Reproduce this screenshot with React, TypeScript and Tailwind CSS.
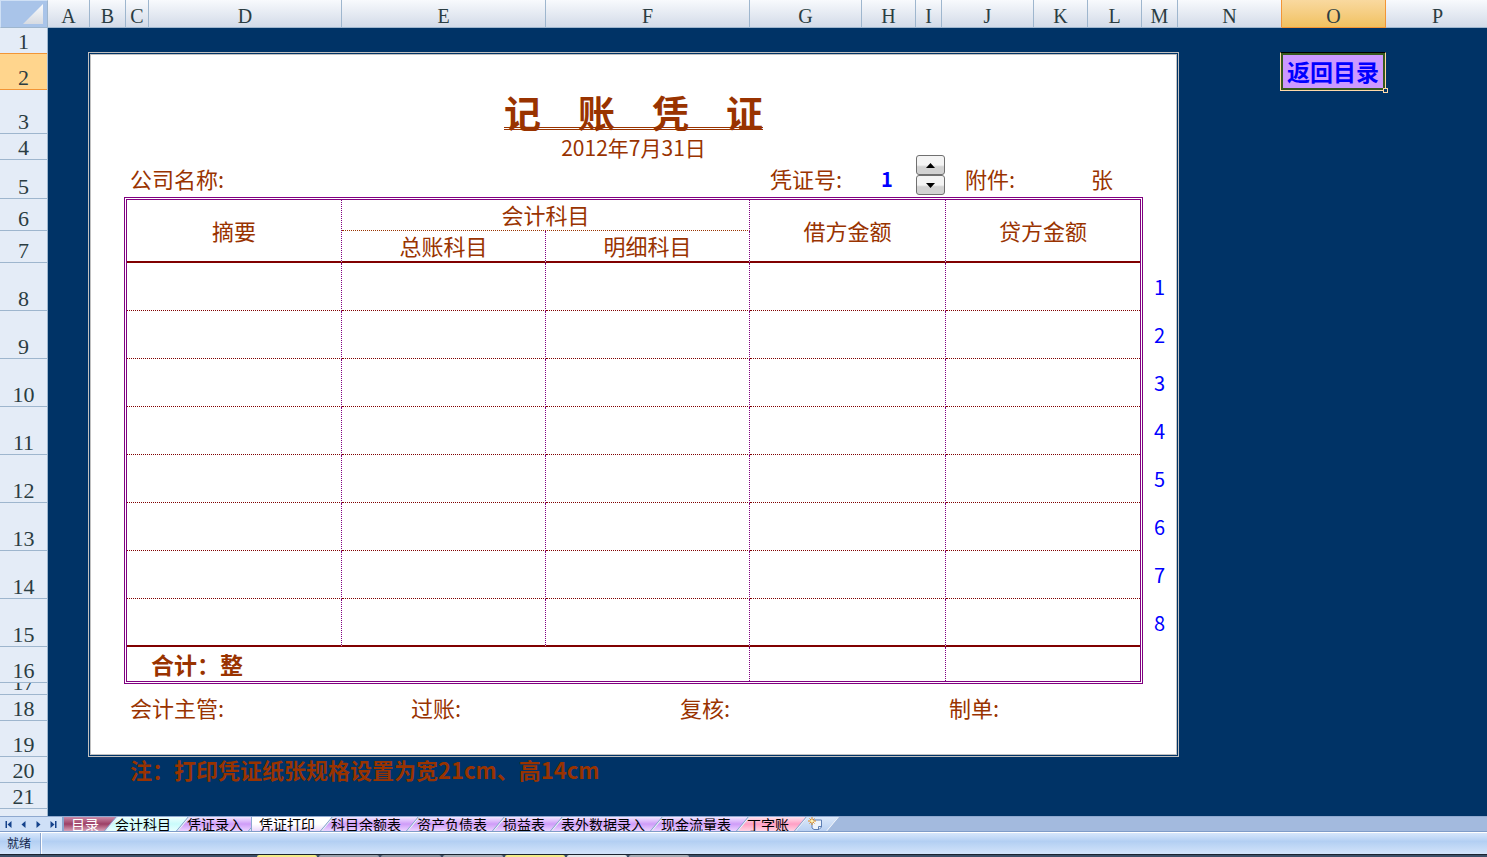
import { useState } from "react";
import { clsx } from "clsx";

const columns = [
    { name: "A", width: "w-[42px]" },
    { name: "B", width: "w-[36px]" },
    { name: "C", width: "w-[23px]" },
    { name: "D", width: "w-[193px]" },
    { name: "E", width: "w-[204px]" },
    { name: "F", width: "w-[204px]" },
    { name: "G", width: "w-[112px]" },
    { name: "H", width: "w-[54px]" },
    { name: "I", width: "w-[26px]" },
    { name: "J", width: "w-[92px]" },
    { name: "K", width: "w-[54px]" },
    { name: "L", width: "w-[54px]" },
    { name: "M", width: "w-[36px]" },
    { name: "N", width: "w-[104px]" },
    { name: "O", width: "w-[104px]", selected: true },
    { name: "P", width: "w-[104px]" },
];

const sheetRows = [
    "h-[26px]", "h-[36px]", "h-[44px]", "h-[26px]", "h-[39px]", "h-[32px]", "h-[32px]",
    "h-[48px]", "h-[48px]", "h-[48px]", "h-[48px]", "h-[48px]", "h-[48px]", "h-[48px]", "h-[48px]",
    "h-[36px]", "h-[12px]", "h-[26px]", "h-[36px]", "h-[26px]", "h-[26px]",
];

const entryLines = [1, 2, 3, 4, 5, 6, 7, 8];

const signatures = ["会计主管:", "过账:", "复核:", "制单:"];

const purple = "from-[#f3e6ff] via-[#cf9cf8] to-[#ecd3ff]";

const sheetTabs = [
    { label: "目录", fill: "from-[#c98aa8] via-[#9c3f66] to-[#d8a3b9]", light: true },
    { label: "会计科目", fill: "from-[#effffe] via-[#c9fbfb] to-[#e8ffff]" },
    { label: "凭证录入", fill: purple },
    { label: "凭证打印", fill: "from-white via-white to-[#ecd8fb]", active: true },
    { label: "科目余额表", fill: purple },
    { label: "资产负债表", fill: purple },
    { label: "损益表", fill: purple },
    { label: "表外数据录入", fill: purple },
    { label: "现金流量表", fill: purple },
    { label: "丁字账", fill: "from-[#ffe3ee] via-[#ff9fc4] to-[#ffd3e3]" },
];

const navButtons = [
    { label: "第一张工作表", d: "M1 1h1.5v7H1zM7 1v7L3 4.5z" },
    { label: "上一张工作表", d: "M6 1v7L2 4.5z" },
    { label: "下一张工作表", d: "M2 1v7l4-3.5z" },
    { label: "最后一张工作表", d: "M1 1v7l4-3.5zM5.5 1H7v7H5.5z" },
];

const taskButtons = [
    { width: "w-[60px]", fill: "bg-[#f3ec86]" },
    { width: "w-[60px]", fill: "bg-[#9ba3ad]" },
    { width: "w-[60px]", fill: "bg-[#8d97a3]" },
    { width: "w-[60px]", fill: "bg-[#a7aeb6]" },
    { width: "w-[60px]", fill: "bg-[#f3ec86]" },
    { width: "w-[60px]", fill: "bg-[#e4e6e8]" },
    { width: "w-[60px]", fill: "bg-[#a7aeb6]" },
];

const ColumnHeaders = () => (
    <div className="flex h-7 shrink-0 overflow-hidden font-['Liberation_Serif',serif] text-[20px] text-[#2b3d42]">
        <button
            aria-label="全选"
            className="flex w-12 shrink-0 items-end justify-end border border-[#9eb6ce] border-t-[#cfe0f5] border-l-[#cfe0f5] bg-[#a9c4e9] pr-1 pb-[3px]"
        >
            <svg width="20" height="20" viewBox="0 0 20 20">
                <defs>
                    <linearGradient id="corner" x1="0" y1="0" x2="0" y2="1">
                        <stop offset="0" stopColor="#fafbfc" />
                        <stop offset="1" stopColor="#d7dbe2" />
                    </linearGradient>
                </defs>
                <path d="M20 0v20H0z" fill="url(#corner)" />
            </svg>
        </button>
        {columns.map((col) => (
            <div
                key={col.name}
                className={clsx(
                    "flex shrink-0 justify-center border-r border-b bg-gradient-to-b pt-[3px] leading-[26px]",
                    col.width,
                    col.selected
                        ? "border-[#f29536] from-[#f9d99f] to-[#f1c15f]"
                        : "border-[#9eb6ce] from-[#f8fafd] to-[#d3dbe8]",
                    col.name === "N" && "border-r-[#f29536]"
                )}
            >
                {col.name}
            </div>
        ))}
    </div>
);

const RowHeaders = () => (
    <div className="flex w-12 shrink-0 flex-col overflow-hidden border-r border-[#9eb6ce] bg-[#e4ecf7] font-['Liberation_Serif',serif] text-[22px] leading-[22px] text-[#2b3d42]">
        {sheetRows.map((height, index) => (
            <div
                key={index}
                className={clsx(
                    "flex shrink-0 items-end justify-center overflow-hidden border-b",
                    height,
                    index === 1 ? "border-[#f29536] bg-[#ffd58d]" : "border-[#9eb6ce]",
                    index === 0 && "border-b-[#f29536]"
                )}
            >
                {index + 1}
            </div>
        ))}
    </div>
);

const Spinner = ({ onUp, onDown }: { onUp: () => void; onDown: () => void }) => {
    const button =
        "flex h-5 w-[29px] items-center justify-center rounded-[3px] border border-[#707070] bg-gradient-to-b from-[#f4f4f4] from-50% to-[#d2d2d2] to-60%";
    return (
        <div className="flex flex-col">
            <button aria-label="增加" className={button} onClick={onUp}>
                <svg width="9" height="5" viewBox="0 0 9 5"><path d="M0 5 4.500 0 9 5z" /></svg>
            </button>
            <button aria-label="减少" className={button} onClick={onDown}>
                <svg width="9" height="5" viewBox="0 0 9 5"><path d="M0 0h9L4.500 5z" /></svg>
            </button>
        </div>
    );
};

const VoucherTable = () => {
    const dotted = "border-r border-r-[#800080] [border-right-style:dotted]";
    const thick = "border-b-2 border-b-[#800000] [border-bottom-style:solid]";
    return (
        <table className="w-full table-fixed border-separate border-spacing-0">
            <colgroup>
                <col className="w-[215px]" />
                <col className="w-[204px]" />
                <col className="w-[204px]" />
                <col className="w-[196px]" />
                <col />
            </colgroup>
            <thead>
                <tr className="h-[31px]">
                    <th rowSpan={2} className={clsx("p-0 font-normal", dotted, thick)}>摘要</th>
                    <th colSpan={2} className={clsx("border-b border-b-[#993300] px-0 pt-0 pb-[2px] leading-[28px] font-normal [border-bottom-style:dotted]", dotted)}>
                        会计科目
                    </th>
                    <th rowSpan={2} className={clsx("p-0 font-normal", dotted, thick)}>借方金额</th>
                    <th rowSpan={2} className={clsx("p-0 font-normal", thick)}>贷方金额</th>
                </tr>
                <tr className="h-[32px]">
                    <th className={clsx("px-0 pt-0 pb-[2px] leading-[28px] font-normal", dotted, thick)}>总账科目</th>
                    <th className={clsx("px-0 pt-0 pb-[2px] leading-[28px] font-normal", dotted, thick)}>明细科目</th>
                </tr>
            </thead>
            <tbody>
                {entryLines.map((line) => {
                    const bottom =
                        line === 8 ? thick : "border-b border-b-[#800000] [border-bottom-style:dotted]";
                    return (
                        <tr key={line} className="h-12">
                            <td className={clsx("p-0", dotted, bottom)} />
                            <td className={clsx("p-0", dotted, bottom)} />
                            <td className={clsx("p-0", dotted, bottom)} />
                            <td className={clsx("p-0", dotted, bottom)} />
                            <td className={clsx("p-0", bottom)} />
                        </tr>
                    );
                })}
            </tbody>
            <tfoot>
                <tr className="h-[34px]">
                    <td colSpan={3} className={clsx("py-0 pr-0 pl-6 text-[23px] leading-[34px] font-bold", dotted)}>
                        合计：整
                    </td>
                    <td className={clsx("p-0", dotted)} />
                    <td className="p-0" />
                </tr>
            </tfoot>
        </table>
    );
};

const Voucher = () => {
    const [number, setNumber] = useState(1);

    return (
        <section className="w-full max-w-[1091px] border-[3px] border-double border-[#c0c0c0] bg-white bg-clip-padding pt-[35px] pb-[34px] pl-[33px] text-[22px] text-[#993300]">
            <div className="flex">
                <div className="min-w-0 flex-1">
                    <h1 className="flex h-11 justify-center pt-1 text-[37px] font-bold">
                        <span className="h-9 border-b-[3px] border-double border-[#993300] leading-[36px] whitespace-pre">
                            记　账　凭　证
                        </span>
                    </h1>
                    <p className="h-[26px] text-center text-[21px] leading-[26px]">2012年7月31日</p>
                    <div className="flex h-[37px] items-end pb-[2px] leading-[33px]">
                        <span className="flex-1 pl-[6px]">公司名称:</span>
                        <span className="w-[100px] whitespace-nowrap">凭证号:</span>
                        <output className="mr-3 w-[34px] text-center text-[20px] font-bold text-[#0000ff]">{number}</output>
                        <Spinner
                            onUp={() => setNumber(number + 1)}
                            onDown={() => setNumber(Math.max(1, number - 1))}
                        />
                        <span className="w-[146px] pl-5">附件:</span>
                        <span className="w-[52px]">张</span>
                    </div>
                    <div className="border-[3px] border-double border-[#800080]">
                        <VoucherTable />
                    </div>
                </div>
                {/* Line numbers printed beside the entry rows */}
                <ol className="flex w-[33px] shrink-0 flex-col pt-[173px] text-center text-[20px] leading-[48px] text-[#0000ff]">
                    {entryLines.map((line) => (
                        <li key={line}>{line}</li>
                    ))}
                </ol>
            </div>
            <div className="mt-[10px] flex h-[26px] pl-[6px] leading-[26px] whitespace-nowrap">
                {signatures.map((role, index) => (
                    <span
                        key={role}
                        className={clsx(index === 0 ? "w-[281px]" : index === 3 ? "flex-1" : "w-[269px]")}
                    >
                        {role}
                    </span>
                ))}
            </div>
        </section>
    );
};

const TabBar = () => (
    <nav className="flex h-4 shrink-0 overflow-hidden border-t border-b border-t-[#8fa9cf] border-b-[#7f9cc8] bg-[#a3bade] text-[14px] leading-[14px]">
        <div className="relative z-10 flex w-[63px] shrink-0 items-center justify-between border-r border-[#8ba6cf] bg-[#cfe0f7] px-1">
            {navButtons.map((nav) => (
                <button key={nav.label} aria-label={nav.label}>
                    <svg width="9" height="9" viewBox="0 0 8 9" fill="#15428b"><path d={nav.d} /></svg>
                </button>
            ))}
        </div>
        {sheetTabs.map((tab, index) => (
            <button
                key={tab.label}
                className={clsx(
                    "relative shrink-0 pr-3 whitespace-nowrap",
                    index === 0 ? "pl-2" : "pl-1",
                    tab.light ? "text-white" : "text-black"
                )}
            >
                <span className={clsx("absolute inset-0 -skew-x-[40deg] border-r border-l border-r-[#7f9cc8] border-l-white bg-gradient-to-b", tab.fill)} />
                {(index === 0 || tab.active) && (
                    <span className={clsx("absolute inset-y-0 w-4 border-l border-l-[#8ba6cf] bg-gradient-to-b", index === 0 ? "left-0" : "-left-1", tab.fill)} />
                )}
                <span className="relative">{tab.label}</span>
            </button>
        ))}
        <button aria-label="插入工作表" className="relative w-8 shrink-0 pl-[7px]">
            <span className="absolute inset-0 -skew-x-[40deg] border-r border-l border-white bg-gradient-to-b from-[#dbe8fa] to-[#b9d0f2]" />
            <svg className="relative" width="15" height="14" viewBox="0 0 15 14">
                <path d="M4 3h9.500v7L11 12.500H6L4 11z" fill="#eef3fb" stroke="#5e7fb5" />
                <path d="M13 9.500h-2.500V12" fill="none" stroke="#5e7fb5" />
                <path d="M4 0v8M0 4h8M1.500 1.500l5 5M6.500 1.500l-5 5" stroke="#e28a1b" />
                <circle cx="4" cy="4" r="1.500" fill="#fff3b0" />
            </svg>
        </button>
    </nav>
);

const App = () => {
    return (
        <div className="flex h-screen flex-col overflow-hidden bg-[#003366] font-['Noto_Sans_CJK_SC',sans-serif]">
            <ColumnHeaders />
            <main className="flex min-h-0 flex-1 overflow-hidden">
                <RowHeaders />
                <div className="min-w-0 flex-1 pt-6 pl-10">
                    <div className="flex items-start">
                        <Voucher />
                        <div className="relative ml-[101px] shrink-0 border border-t-black border-r-[#ffd9a8] border-b-[#ffd9a8] border-l-[#ffd9a8]">
                            <a
                                href="#contents"
                                className="block h-[37px] w-[104px] border-2 border-[#36591c] bg-[#cc99ff] text-center text-[23px] leading-[32px] font-bold whitespace-nowrap text-[#0000ff]"
                            >
                                返回目录
                            </a>
                            <span className="absolute -right-[3px] -bottom-[3px] size-[5px] border border-[#ffd9a8] bg-[#003366]" />
                        </div>
                    </div>
                    <p className="pl-[42px] text-[22px] leading-[24px] font-bold text-[#993300]">
                        注：打印凭证纸张规格设置为宽21cm、高14cm
                    </p>
                </div>
            </main>
            <TabBar />
            <footer className="shrink-0">
                <div className="flex h-[22px] border-t border-white bg-gradient-to-b from-[#d6e6fb] via-[#b3cff3] via-40% to-[#d3e4fa] text-[12px] leading-[20px] text-[#15284b]">
                    <span className="w-[41px] border-r border-[#8ba6cf] pl-[7px]">就绪</span>
                    <span className="border-l border-white" />
                </div>
                <div className="flex h-[3px] gap-[2px] border-t border-[#1b2430] bg-[#3d5068] pl-[257px]">
                    {taskButtons.map((task, index) => (
                        <span key={index} className={clsx("rounded-t-[2px]", task.width, task.fill)} />
                    ))}
                </div>
            </footer>
        </div>
    );
};

export default App;
